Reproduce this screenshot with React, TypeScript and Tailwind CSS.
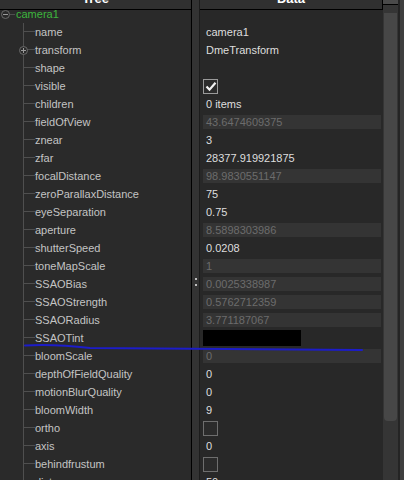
import React from "react";

type Value =
	| { kind: "none" }
	| { kind: "text"; text: string }
	| { kind: "locked"; text: string }
	| { kind: "check"; on: boolean }
	| { kind: "color" };

type Row = { label: string; value: Value; expandable?: boolean };

const rows: Row[] = [
	{ label: "name", value: { kind: "text", text: "camera1" } },
	{ label: "transform", value: { kind: "text", text: "DmeTransform" }, expandable: true },
	{ label: "shape", value: { kind: "none" } },
	{ label: "visible", value: { kind: "check", on: true } },
	{ label: "children", value: { kind: "text", text: "0 items" } },
	{ label: "fieldOfView", value: { kind: "locked", text: "43.6474609375" } },
	{ label: "znear", value: { kind: "text", text: "3" } },
	{ label: "zfar", value: { kind: "text", text: "28377.919921875" } },
	{ label: "focalDistance", value: { kind: "locked", text: "98.9830551147" } },
	{ label: "zeroParallaxDistance", value: { kind: "text", text: "75" } },
	{ label: "eyeSeparation", value: { kind: "text", text: "0.75" } },
	{ label: "aperture", value: { kind: "locked", text: "8.5898303986" } },
	{ label: "shutterSpeed", value: { kind: "text", text: "0.0208" } },
	{ label: "toneMapScale", value: { kind: "locked", text: "1" } },
	{ label: "SSAOBias", value: { kind: "locked", text: "0.0025338987" } },
	{ label: "SSAOStrength", value: { kind: "locked", text: "0.5762712359" } },
	{ label: "SSAORadius", value: { kind: "locked", text: "3.771187067" } },
	{ label: "SSAOTint", value: { kind: "color" } },
	{ label: "bloomScale", value: { kind: "locked", text: "0" } },
	{ label: "depthOfFieldQuality", value: { kind: "text", text: "0" } },
	{ label: "motionBlurQuality", value: { kind: "text", text: "0" } },
	{ label: "bloomWidth", value: { kind: "text", text: "9" } },
	{ label: "ortho", value: { kind: "check", on: false } },
	{ label: "axis", value: { kind: "text", text: "0" } },
	{ label: "behindfrustum", value: { kind: "check", on: false } },
	{ label: "distance", value: { kind: "text", text: "50" } },
];

function Header({ title }: { title: string }) {
	return (
		<div className="relative z-10 h-[10px] shrink-0 overflow-hidden border-b border-black bg-[#303030]">
			<div className="-mt-[9px] text-center font-bold text-[13px] leading-[16px] text-white">
				{title}
			</div>
		</div>
	);
}

function TreeRow({ row }: { row: Row }) {
	return (
		<div className="relative flex h-[18px] items-stretch">
			<div className="w-[23px] shrink-0" />
			<div className="flex w-[12px] shrink-0 flex-col border-l border-[#4f4f4f]">
				<div className="h-[9px] border-b border-[#4f4f4f]" />
			</div>
			<span className="whitespace-nowrap leading-[18px] text-[#c4c4c4]">
				{row.label}
			</span>
			{row.expandable && (
				<div className="absolute top-[5px] left-[19px] flex h-[9px] w-[9px] items-center justify-center rounded-full border border-[#6a6a6a] bg-[#2a2a2a]">
					<svg width="7" height="7" viewBox="0 0 7 7" aria-hidden="true">
						<path d="M1 3.5h5M3.5 1v5" stroke="#9a9a9a" strokeWidth="1" />
					</svg>
				</div>
			)}
		</div>
	);
}

function DataCell({ value }: { value: Value }) {
	switch (value.kind) {
		case "text":
			return (
				<div className="flex h-[18px] items-center pl-[6px] text-[#dedede]">
					{value.text}
				</div>
			);
		case "locked":
			return (
				<div className="flex h-[18px] items-center py-[2px] pl-[3px] pr-[2px]">
					<div className="flex h-full w-full items-center bg-[#343434] pl-[3px] text-[#6c6c6c]">
						{value.text}
					</div>
				</div>
			);
		case "check":
			return (
				<div className="flex h-[18px] items-center pl-[3px]">
					<div
						className={
							value.on
								? "flex h-[15px] w-[15px] items-center justify-center border border-[#9a9a9a] bg-[#2b2b2b]"
								: "h-[15px] w-[15px] border border-[#6e6e6e] bg-[#2b2b2b]"
						}
					>
						{value.on && (
							<svg width="12" height="11" viewBox="0 0 12 11" aria-hidden="true">
								<path
									d="M1.5 5.5l3 3.2L10.5 1.8"
									fill="none"
									stroke="#f2f2f2"
									strokeWidth="2.2"
								/>
							</svg>
						)}
					</div>
				</div>
			);
		case "color":
			return (
				<div className="flex h-[18px] items-center py-[1px] pl-[3px]">
					<div className="h-full w-[98px] bg-black" />
				</div>
			);
		default:
			return <div className="h-[18px]" />;
	}
}

export default function App() {
	return (
		<div
			className="relative flex h-[480px] w-[404px] overflow-hidden bg-[#2a2a2a] text-[11px]"
			style={{ fontFamily: '"Liberation Sans", Arial, sans-serif' }}
		>
			{/* tree column */}
			<div className="flex w-[192px] shrink-0 flex-col border-r border-black bg-[#2a2a2a]">
				<Header title="Tree" />
				<div className="-mt-[5px] flex flex-col">
					<div className="flex h-[18px] items-center">
						<div className="ml-[1px] flex h-[9px] w-[9px] items-center justify-center rounded-full border border-[#6a6a6a]">
							<svg width="7" height="7" viewBox="0 0 7 7" aria-hidden="true">
								<path d="M1 3.5h5" stroke="#9a9a9a" strokeWidth="1" />
							</svg>
						</div>
						<div className="h-px w-[5px] bg-[#4f4f4f]" />
						<span className="pl-px text-[#3db53d]">camera1</span>
					</div>
					{rows.map((row) => (
						<TreeRow key={row.label} row={row} />
					))}
				</div>
			</div>

			{/* splitter */}
			<div className="flex w-[8px] shrink-0 flex-col items-center border-r border-[#1c1c1c] bg-[#333333] pt-[278px]">
				<div className="h-[2px] w-[2px] bg-[#bdbdbd]" />
				<div className="mt-[4px] h-[2px] w-[2px] bg-[#bdbdbd]" />
			</div>

			{/* data column */}
			<div className="flex min-w-0 flex-1 flex-col bg-[#282828]">
				<div className="border-r border-black">
					<Header title="Data" />
				</div>
				<div className="-mt-[5px] flex flex-col">
					<div className="h-[18px]" />
					{rows.map((row) => (
						<DataCell key={row.label} value={row.value} />
					))}
				</div>
			</div>

			{/* scrollbar */}
			<div className="flex w-[21px] shrink-0 bg-[#2c2c2c]">
				<div className="flex w-[15px] flex-col bg-[#353535]">
					<div className="h-[5px] border-b border-black bg-[#4a4a4a]" />
					<div className="mx-[1px] mt-[8px] h-[408px] rounded-b-[4px] bg-[#474747]" />
				</div>
				<div className="w-[2px] bg-[#242424]" />
				<div className="w-[4px] bg-[#3e3e3e]" />
			</div>

			{/* hand-drawn annotation */}
			<svg
				className="pointer-events-none absolute top-0 left-0"
				width="404"
				height="480"
				aria-hidden="true"
			>
				<path
					d="M25 345.5 Q 55 344 90 348 L 362 350"
					fill="none"
					stroke="#1c1cc8"
					strokeWidth="2"
					strokeLinecap="round"
				/>
			</svg>
		</div>
	);
}
